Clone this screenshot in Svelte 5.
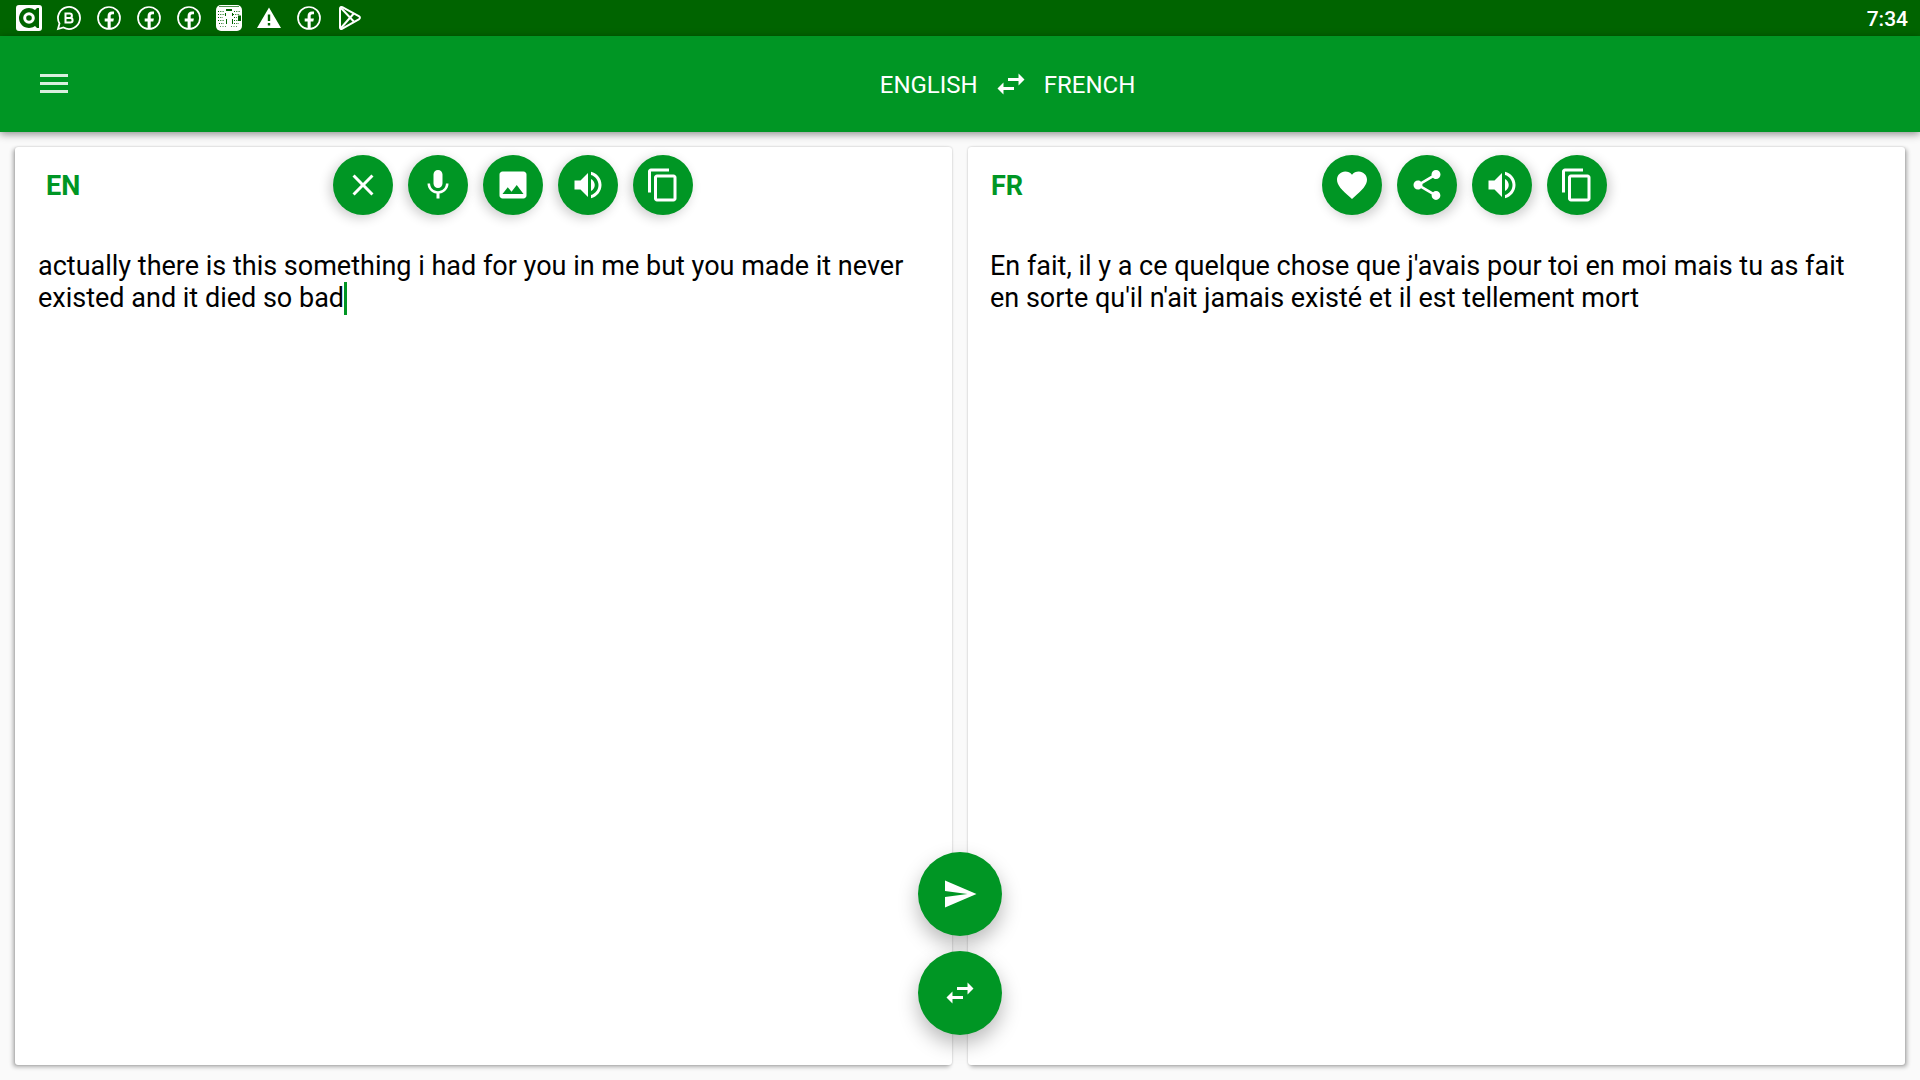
<script>
  const icons = {
    close: 'M19 6.41 17.59 5 12 10.59 6.41 5 5 6.41 10.59 12 5 17.59 6.41 19 12 13.41 17.59 19 19 17.59 13.41 12z',
    mic: 'M12 14c1.66 0 2.99-1.34 2.99-3L15 5c0-1.66-1.34-3-3-3S9 3.34 9 5v6c0 1.66 1.34 3 3 3zm5.3-3c0 3-2.54 5.1-5.3 5.1S6.7 14 6.7 11H5c0 3.41 2.72 6.23 6 6.72V21h2v-3.28c3.28-.48 6-3.3 6-6.72h-1.7z',
    image: 'M21 19V5c0-1.1-.9-2-2-2H5c-1.1 0-2 .9-2 2v14c0 1.1.9 2 2 2h14c1.1 0 2-.9 2-2zM8.5 13.5l2.5 3.01L14.5 12l4.5 6H5l3.5-4.5z',
    volume: 'M3 9v6h4l5 5V4L7 9H3zm13.5 3c0-1.77-1.02-3.29-2.5-4.03v8.05c1.48-.73 2.5-2.25 2.5-4.02zM14 3.23v2.06c2.89.86 5 3.54 5 6.71s-2.11 5.85-5 6.71v2.06c4.01-.91 7-4.49 7-8.77s-2.99-7.86-7-8.77z',
    copy: 'M16 1H4c-1.1 0-2 .9-2 2v14h2V3h12V1zm3 4H8c-1.1 0-2 .9-2 2v14c0 1.1.9 2 2 2h11c1.1 0 2-.9 2-2V7c0-1.1-.9-2-2-2zm0 16H8V7h11v14z',
    heart: 'M12 21.35l-1.45-1.32C5.4 15.36 2 12.28 2 8.5 2 5.42 4.42 3 7.5 3c1.74 0 3.41.81 4.5 2.09C13.09 3.81 14.76 3 16.5 3 19.58 3 22 5.42 22 8.5c0 3.78-3.4 6.86-8.55 11.54L12 21.35z',
    share: 'M18 16.08c-.76 0-1.44.3-1.96.77L8.91 12.7c.05-.23.09-.46.09-.7s-.04-.47-.09-.7l7.05-4.11c.54.5 1.25.81 2.04.81 1.66 0 3-1.34 3-3s-1.34-3-3-3-3 1.34-3 3c0 .24.04.47.09.7L8.04 9.81C7.5 9.31 6.79 9 6 9c-1.66 0-3 1.34-3 3s1.34 3 3 3c.79 0 1.5-.31 2.04-.81l7.12 4.16c-.05.21-.08.43-.08.65 0 1.61 1.31 2.92 2.92 2.92s2.92-1.31 2.92-2.92-1.31-2.92-2.92-2.92z',
    send: 'M2.01 21 23 12 2.01 3 2 10l15 2-15 2z',
    swap: 'M6.99 11 3 15l3.99 4v-3H14v-2H6.99v-3zM21 9l-3.99-4v3H10v2h7.01v3L21 9z'
  };
  const sourceTools = [
    { label: 'Clear', icon: 'close' },
    { label: 'Voice input', icon: 'mic' },
    { label: 'Image input', icon: 'image' },
    { label: 'Listen', icon: 'volume' },
    { label: 'Copy', icon: 'copy' }
  ];
  const targetTools = [
    { label: 'Favourite', icon: 'heart' },
    { label: 'Share', icon: 'share' },
    { label: 'Listen', icon: 'volume' },
    { label: 'Copy', icon: 'copy' }
  ];
  let source = $state('actually there is this something i had for you in me but you made it never existed and it died so bad');
  const translation = "En fait, il y a ce quelque chose que j'avais pour toi en moi mais tu as fait en sorte qu'il n'ait jamais existé et il est tellement mort";
</script>

{#snippet glyph(name)}
  <svg class="glyph" viewBox="0 0 24 24" aria-hidden="true"><path d={icons[name]} /></svg>
{/snippet}

{#snippet facebook()}
  <svg viewBox="0 0 26 26" aria-hidden="true">
    <circle cx="13" cy="13" r="11" fill="none" stroke="currentColor" stroke-width="1.7" />
    <path d="M11.6 24v-7.4H8.7v-3.2h2.9V11c0-3 1.7-4.6 4.4-4.6.8 0 1.7.1 2 .2v2.7h-1.5c-1.4 0-1.8.8-1.8 1.7v2.4h3.2l-.6 3.2h-2.6V24z" />
  </svg>
{/snippet}

<div class="app">
  <div class="status">
    <div class="notices">
      <svg viewBox="0 0 26 26" aria-hidden="true">
        <path fill-rule="evenodd" d="M3 0h20a3 3 0 0 1 3 3v20a3 3 0 0 1-3 3H3a3 3 0 0 1-3-3V3a3 3 0 0 1 3-3zM13 3a10 10 0 1 0 6 18l2 2h2V3h-2l-2 2a10 10 0 0 0-6-2z" />
        <circle cx="13" cy="13" r="4.3" fill="none" stroke="currentColor" stroke-width="3" />
      </svg>
      <svg viewBox="0 0 26 26" aria-hidden="true">
        <path d="M2 24l1.5-5.5A11 11 0 1 1 7.500 22.500z" fill="none" stroke="currentColor" stroke-width="1.8" />
        <path d="M9.500 8.500h4.200a2.100 2.100 0 0 1 0 4.400H9.500zM9.500 12.900h4.800a2.300 2.300 0 0 1 0 4.600H9.500z" fill="none" stroke="currentColor" stroke-width="2" />
      </svg>
      {@render facebook()}
      {@render facebook()}
      {@render facebook()}
      <svg viewBox="0 0 26 26" aria-hidden="true">
        <rect width="26" height="26" rx="5" />
        <g fill="none" stroke="#006400">
          <path d="M3 1.5h20" stroke-width=".7" />
          <path d="M10 5h6" stroke-width="2" />
          <path d="M2 6.500h6M18 6.500h6M2 9.500h7M17 9.500h7M2 12.500h5M18 12.500h3M2 15.500h6M18 15.500h4M3 18.500h5M18 18.500h5" stroke-dasharray="1 1.300" stroke-width="1.200" />
          <path d="M4 21.500h6M15 21.500h7" stroke-dasharray="1 1.500" stroke-width=".7" />
          <path d="M9.500 8v3M10.500 14v5M16.500 8v3M16.500 14v5" />
          <path d="M23.500 10.500v5.500" stroke-width="3" />
        </g>
      </svg>
      <svg viewBox="0 0 26 26" aria-hidden="true">
        <path fill-rule="evenodd" d="M13 2.500 25 23H1zM11.800 9.500v6.500h2.400V9.500zM11.800 18v2.500h2.400V18z" />
      </svg>
      {@render facebook()}
      <svg viewBox="0 0 26 26" aria-hidden="true">
        <g fill="none" stroke="currentColor" stroke-width="2" stroke-linejoin="round">
          <path d="M4 3.500c0-1.500 1-2 2.300-1.300l16.500 9c1.500.9 1.500 2.200 0 3.100l-16.500 9.400C5 24.500 4 23.800 4 22.500z" />
          <path d="M4.500 2.500 17.800 16.500M4.500 23.500 17.800 8.500" />
        </g>
      </svg>
    </div>
    <time>7:34</time>
  </div>

  <header>
    <button class="menu" aria-label="Open menu">
      <svg viewBox="0 0 28 22" aria-hidden="true"><path d="M0 1h28v3H0zM0 9h28v3H0zM0 17h28v3H0z" /></svg>
    </button>
    <nav class="languages" aria-label="Languages">
      <button class="language">ENGLISH</button>
      <button aria-label="Swap languages">{@render glyph('swap')}</button>
      <button class="language">FRENCH</button>
    </nav>
  </header>

  <main>
    <section class="card left">
      <div class="bar">
        <label class="code source" for="source-text">EN</label>
        <div class="tools">
          {#each sourceTools as tool}
            <button class="round" aria-label={tool.label}>{@render glyph(tool.icon)}</button>
          {/each}
        </div>
      </div>
      <div class="entry">
        <textarea id="source-text" bind:value={source} spellcheck="false"></textarea>
        <span class="caret"></span>
      </div>
    </section>
    <section class="card right">
      <div class="bar">
        <h2 class="code">FR</h2>
        <div class="tools">
          {#each targetTools as tool}
            <button class="round" aria-label={tool.label}>{@render glyph(tool.icon)}</button>
          {/each}
        </div>
      </div>
      <p>{translation}</p>
    </section>
    <div class="actions">
      <button class="fab" aria-label="Translate">{@render glyph('send')}</button>
      <button class="fab" aria-label="Swap texts">{@render glyph('swap')}</button>
    </div>
  </main>
</div>

<style>
  :global(body) {
    margin: 0;
    background: #fafafa;
  }
  .app {
    --green: #009624;
    display: flex;
    flex-direction: column;
    min-height: 100vh;
    font-family: Roboto, sans-serif;
    color: #000;
  }
  .app * {
    box-sizing: border-box;
  }
  button {
    display: flex;
    align-items: center;
    justify-content: center;
    margin: 0;
    padding: 0;
    border: 0;
    background: none;
    color: #fff;
    font: inherit;
    cursor: pointer;
  }
  svg {
    display: block;
    fill: currentColor;
  }
  .status {
    display: flex;
    align-items: center;
    justify-content: space-between;
    height: 36px;
    padding: 0 12px 0 16px;
    background: #006400;
    color: #fff;
  }
  .notices {
    display: flex;
    gap: 14px;
  }
  .notices svg {
    width: 26px;
    height: 26px;
  }
  time {
    padding-top: 2px;
    font-size: 21px;
    font-weight: 500;
    line-height: 24px;
  }
  header {
    display: grid;
    grid-template-columns: 95px 1fr;
    align-items: center;
    height: 96px;
    background: var(--green);
    box-shadow: 0 2px 8px rgba(0, 0, 0, 0.45);
  }
  .menu {
    width: 28px;
    margin-left: 40px;
  }
  .menu svg {
    width: 28px;
    height: 22px;
    opacity: 0.85;
  }
  .languages {
    display: flex;
    align-items: center;
    justify-content: center;
    gap: 15px;
    font-size: 24px;
    line-height: 28px;
  }
  .language {
    padding-top: 2px;
  }
  .glyph {
    width: 36px;
    height: 36px;
  }
  main {
    position: relative;
    flex: 1;
    display: grid;
    grid-template-columns: 1fr 1fr;
    gap: 16px;
    padding: 15px;
  }
  .card {
    display: flex;
    flex-direction: column;
    min-width: 0;
    background: #fff;
    border-radius: 3px;
  }
  .left {
    box-shadow: -2px 2px 4px rgba(0, 0, 0, 0.3), 0 0 2px rgba(0, 0, 0, 0.2);
  }
  .right {
    box-shadow: 2px 2px 4px rgba(0, 0, 0, 0.3), 0 0 2px rgba(0, 0, 0, 0.2);
  }
  .bar {
    display: flex;
    align-items: center;
    padding: 8px 15px 8px 23px;
  }
  .code {
    width: 48px;
    margin: 0;
    padding-top: 2px;
    color: var(--green);
    font-size: 27px;
    font-weight: 700;
    line-height: 32px;
  }
  .source {
    width: 50px;
    padding-left: 8px;
  }
  .tools {
    flex: 1;
    display: flex;
    justify-content: center;
    gap: 15px;
  }
  .round {
    width: 60px;
    height: 60px;
    border-radius: 50%;
    background: var(--green);
  }
  .left .round {
    box-shadow: -3px 3px 12px rgba(0, 0, 0, 0.2);
  }
  .right .round {
    box-shadow: 3px 3px 12px rgba(0, 0, 0, 0.2);
  }
  .entry {
    position: relative;
    flex: 1;
    display: flex;
  }
  textarea,
  p {
    flex: 1;
    margin: 0;
    padding: 27px 23px;
    font: 27px/32px Roboto, sans-serif;
    color: #000;
  }
  p {
    padding-right: 38px;
    padding-left: 22px;
  }
  textarea {
    border: 0;
    outline: 0;
    resize: none;
    background: transparent;
    caret-color: var(--green);
  }
  .caret {
    position: absolute;
    left: 329px;
    top: 59px;
    width: 3px;
    height: 33px;
    background: var(--green);
  }
  .actions {
    position: absolute;
    left: 50%;
    bottom: 45px;
    display: grid;
    gap: 15px;
    transform: translateX(-50%);
  }
  .fab {
    width: 84px;
    height: 84px;
    border-radius: 50%;
    background: var(--green);
    box-shadow: 0 9px 20px rgba(0, 0, 0, 0.28);
  }
</style>
